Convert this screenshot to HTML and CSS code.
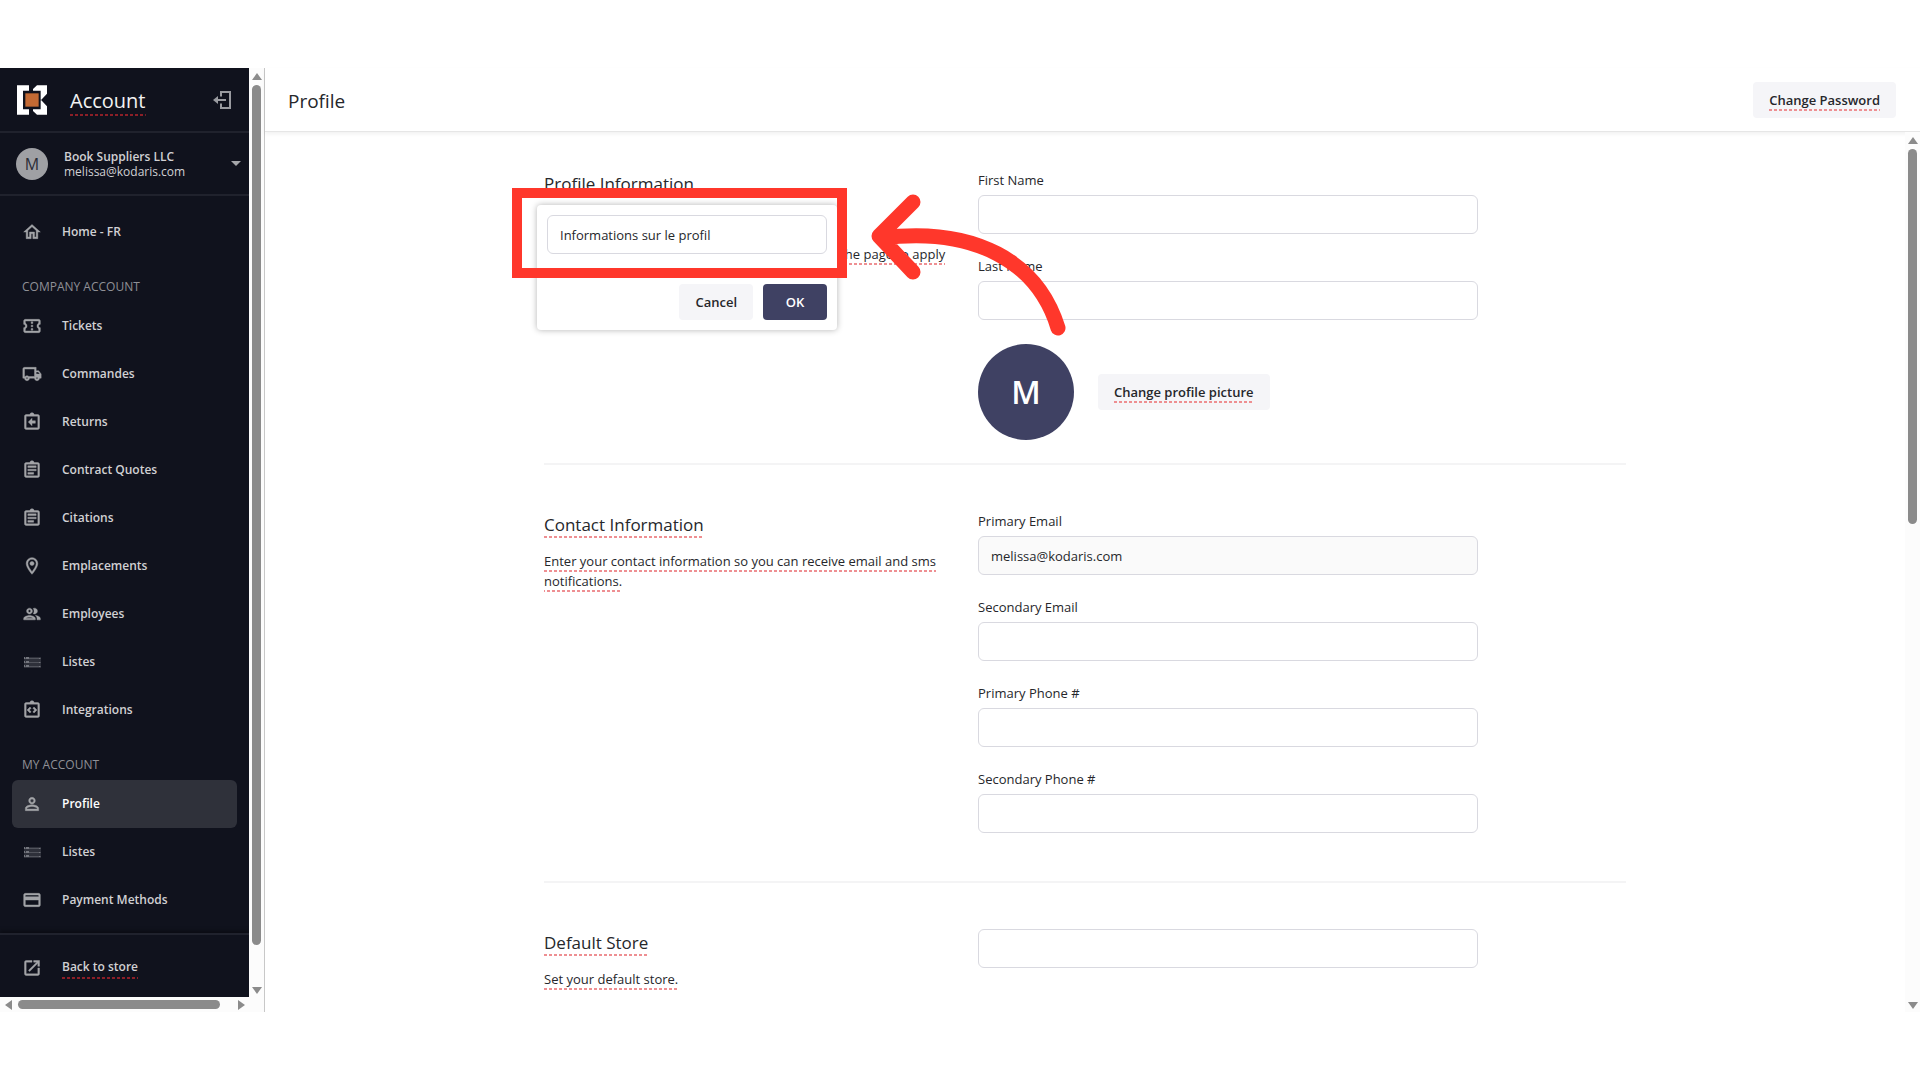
FILE: index.html
```html
<!DOCTYPE html>
<html lang="en">
<head>
    <meta charset="UTF-8">
    <meta name="viewport" content="width=device-width, initial-scale=1.0">
    <title>Profile</title>
    <link rel="stylesheet" href="styles.css">
</head>
<body>

<div class="app">
    <div class="side">
        <div class="side-row">
            <aside class="sidebar">
                <div class="brand">
                    <svg class="logo" viewBox="52 75 90 88" aria-hidden="true">
                        <path fill="#fff" d="M52 75h36v16H70v56h18v16H52zM112 75h30v25l-17 18h-2V91h-23v-5zM112 163h30v-25l-17-18h-2v27h-23v5z"/>
                        <path fill="#c46a34" d="M77 99h40v40H77z"/>
                    </svg>
                    <span class="brand-name"><span class="tr">Account</span></span>
                    <button class="icon-btn" aria-label="Log out">
                        <svg viewBox="0 0 18 18"><path fill="none" stroke="currentColor" stroke-width="2" d="M8 5.500V1h9v16H8v-4.500M13 9H4"/><path fill="currentColor" d="M0 9l5-4v8z"/></svg>
                    </button>
                </div>
                <button class="account">
                    <span class="account-avatar">M</span>
                    <span class="account-text"><b>Book Suppliers LLC</b><br>melissa@kodaris.com</span>
                    <svg class="caret" viewBox="0 0 10 5" fill="currentColor"><path d="M0 0h10L5 5z"/></svg>
                </button>
                <nav class="nav">
                    <a class="nav-link" href="#"><svg viewBox="0 0 24 24"><path d="M12 5.690l5 4.500V18h-2v-6H9v6H7v-7.810l5-4.500M12 3L2 12h3v8h6v-6h2v6h6v-8h3L12 3z"/></svg>Home - FR</a>
                    <h2 class="nav-title">COMPANY ACCOUNT</h2>
                    <a class="nav-link" href="#"><svg viewBox="0 0 24 24"><path d="M22 10V6c0-1.110-.9-2-2-2H4c-1.100 0-1.990.89-1.990 2v4c1.100 0 1.990.9 1.990 2s-.89 2-2 2v4c0 1.100.9 2 2 2h16c1.100 0 2-.9 2-2v-4c-1.100 0-2-.9-2-2s.9-2 2-2zm-2-1.460c-1.190.69-2 1.990-2 3.460s.81 2.770 2 3.460V18H4v-2.540c1.190-.69 2-1.990 2-3.460 0-1.480-.8-2.770-1.990-3.460L4 6h16v2.540zM11 15h2v2h-2zm0-4h2v2h-2zm0-4h2v2h-2z"/></svg>Tickets</a>
                    <a class="nav-link" href="#"><svg viewBox="0 0 24 24"><path d="M20 8h-3V4H3c-1.100 0-2 .9-2 2v11h2c0 1.660 1.340 3 3 3s3-1.340 3-3h6c0 1.660 1.340 3 3 3s3-1.340 3-3h2v-5l-3-4zm-.5 1.500l1.960 2.500H17V9.500h2.500zM6 18c-.55 0-1-.45-1-1s.45-1 1-1 1 .45 1 1-.45 1-1 1zm2.220-3c-.55-.61-1.330-1-2.220-1s-1.670.39-2.220 1H3V6h12v9H8.220zM18 18c-.55 0-1-.45-1-1s.45-1 1-1 1 .45 1 1-.45 1-1 1z"/></svg>Commandes</a>
                    <a class="nav-link" href="#"><svg viewBox="0 0 24 24"><path d="M19 3h-4.180C14.400 1.840 13.300 1 12 1s-2.400.84-2.820 2H5c-1.100 0-2 .9-2 2v14c0 1.100.9 2 2 2h14c1.100 0 2-.9 2-2V5c0-1.100-.9-2-2-2zm0 16H5V5h14v14zM16 10.500h-4V7.500L7.500 12l4.500 4.500v-3h4z"/></svg>Returns</a>
                    <a class="nav-link" href="#"><svg viewBox="0 0 24 24"><path d="M7 15h7v2H7zm0-4h10v2H7zm0-4h10v2H7zm12-4h-4.180C14.400 1.840 13.300 1 12 1s-2.400.84-2.820 2H5c-1.100 0-2 .9-2 2v14c0 1.100.9 2 2 2h14c1.100 0 2-.9 2-2V5c0-1.100-.9-2-2-2zm0 16H5V5h14v14z"/></svg>Contract Quotes</a>
                    <a class="nav-link" href="#"><svg viewBox="0 0 24 24"><path d="M7 15h7v2H7zm0-4h10v2H7zm0-4h10v2H7zm12-4h-4.180C14.400 1.840 13.300 1 12 1s-2.400.84-2.820 2H5c-1.100 0-2 .9-2 2v14c0 1.100.9 2 2 2h14c1.100 0 2-.9 2-2V5c0-1.100-.9-2-2-2zm0 16H5V5h14v14z"/></svg>Citations</a>
                    <a class="nav-link" href="#"><svg viewBox="0 0 24 24"><path d="M12 2C8.130 2 5 5.130 5 9c0 5.250 7 13 7 13s7-7.750 7-13c0-3.870-3.130-7-7-7zM7 9c0-2.760 2.240-5 5-5s5 2.240 5 5c0 2.880-2.880 7.190-5 9.880C9.920 16.210 7 11.850 7 9z"/><circle cx="12" cy="9" r="2.500"/></svg>Emplacements</a>
                    <a class="nav-link" href="#"><svg viewBox="0 0 24 24"><path d="M9 13.750c-2.340 0-7 1.170-7 3.500V19h14v-1.750c0-2.330-4.660-3.500-7-3.500zM4.340 17c.84-.58 2.870-1.250 4.660-1.250s3.820.67 4.660 1.250H4.340zM9 12c1.930 0 3.500-1.570 3.500-3.500S10.930 5 9 5 5.500 6.570 5.500 8.500 7.070 12 9 12zm0-5c.83 0 1.500.67 1.500 1.500S9.830 10 9 10s-1.500-.67-1.500-1.500S8.170 7 9 7zm7.040 6.810c1.160.84 1.960 1.960 1.960 3.440V19h4v-1.750c0-2.020-3.500-3.170-5.960-3.440zM15 12c1.930 0 3.500-1.570 3.500-3.500S16.930 5 15 5c-.54 0-1.040.13-1.500.35.63.89 1 1.980 1 3.150s-.37 2.260-1 3.150c.46.22.96.35 1.500.35z"/></svg>Employees</a>
                    <a class="nav-link dim" href="#"><svg viewBox="0 0 20 20"><path fill-opacity=".3" d="M2 5h17v11H2z"/><path fill-opacity=".5" d="M2 6h17v1H2zM2 10h17v1H2zM2 14h17v1H2z"/><path d="M2 5h1v2H2zm2 0h3v2H4zM2 9h1v2H2zm2 0h3v2H4zM2 13h1v2H2zm2 0h3v2H4zM17 6h1v1h-1zm0 4h1v1h-1zm0 4h1v1h-1z"/></svg>Listes</a>
                    <a class="nav-link" href="#"><svg viewBox="0 0 24 24"><path d="M19 3h-4.180C14.400 1.840 13.300 1 12 1s-2.400.84-2.820 2H5c-1.100 0-2 .9-2 2v14c0 1.100.9 2 2 2h14c1.100 0 2-.9 2-2V5c0-1.100-.9-2-2-2zm0 16H5V5h14v14zM11 14.170L8.830 12 11 9.830 9.590 8.410 6 12l3.590 3.590zM14.410 15.590L18 12l-3.590-3.590L13 9.830 15.170 12 13 14.170z"/></svg>Integrations</a>
                    <h2 class="nav-title">MY ACCOUNT</h2>
                    <a class="nav-link active" href="#"><svg viewBox="0 0 24 24"><path d="M12 5.900a2.100 2.100 0 110 4.200 2.100 2.100 0 010-4.200m0 9c2.970 0 6.100 1.460 6.100 2.100v1.100H5.900V17c0-.64 3.130-2.100 6.100-2.100M12 4C9.790 4 8 5.790 8 8s1.790 4 4 4 4-1.790 4-4-1.790-4-4-4zm0 9c-2.670 0-8 1.340-8 4v3h16v-3c0-2.660-5.330-4-8-4z"/></svg>Profile</a>
                    <a class="nav-link dim" href="#"><svg viewBox="0 0 20 20"><path fill-opacity=".3" d="M2 5h17v11H2z"/><path fill-opacity=".5" d="M2 6h17v1H2zM2 10h17v1H2zM2 14h17v1H2z"/><path d="M2 5h1v2H2zm2 0h3v2H4zM2 9h1v2H2zm2 0h3v2H4zM2 13h1v2H2zm2 0h3v2H4zM17 6h1v1h-1zm0 4h1v1h-1zm0 4h1v1h-1z"/></svg>Listes</a>
                    <a class="nav-link" href="#"><svg viewBox="0 0 24 24"><path d="M20 4H4c-1.110 0-1.990.89-1.990 2L2 18c0 1.110.89 2 2 2h16c1.110 0 2-.89 2-2V6c0-1.110-.89-2-2-2zm0 14H4v-6h16v6zm0-10H4V6h16v2z"/></svg>Payment Methods</a>
                </nav>
                <div class="side-foot">
                    <a class="nav-link" href="#"><svg viewBox="0 0 24 24"><path d="M19 19H5V5h7V3H5a2 2 0 00-2 2v14a2 2 0 002 2h14c1.100 0 2-.9 2-2v-7h-2v7zM14 3v2h3.590l-9.830 9.830 1.410 1.410L19 6.410V10h2V3h-7z"/></svg><span class="tr">Back to store</span></a>
                </div>
            </aside>
            <div class="vscroll side-scroll" aria-hidden="true"><i class="up"></i><i class="thumb"></i><i class="down"></i></div>
        </div>
        <div class="hscroll" aria-hidden="true"><i class="left"></i><i class="thumb"></i><i class="right"></i></div>
    </div>

    <main class="main">
        <header class="topbar">
            <h1>Profile</h1>
            <button class="btn"><span class="tr">Change Password</span></button>
        </header>
        <div class="body-row">
            <div class="content">
                <section class="section first">
                    <div class="info">
                        <h2><span class="tr">Profile Information</span></h2>
                        <p><span class="tr">Edit your profile.</span></p>
                        <p><span class="tr">Whenever you edit these options, please refresh the page to apply changes.</span></p>
                        <form class="popup">
                            <input type="text" aria-label="Translation" value="Informations sur le profil">
                            <div class="popup-actions">
                                <button type="button" class="btn">Cancel</button>
                                <button type="button" class="btn primary">OK</button>
                            </div>
                        </form>
                        <div class="marker"></div>
                        <svg class="arrow" viewBox="870 190 200 150" aria-hidden="true"><path d="M913 202L879 236L913 272M881 238C975 226 1038 262 1058 328"/></svg>
                    </div>
                    <div class="fields">
                        <div class="field"><label for="first">First Name</label><input type="text" id="first"></div>
                        <div class="field"><label for="last">Last Name</label><input type="text" id="last"></div>
                        <div class="picture">
                            <span class="avatar">M</span>
                            <button class="btn"><span class="tr">Change profile picture</span></button>
                        </div>
                    </div>
                </section>
                <section class="section">
                    <div class="info">
                        <h2><span class="tr">Contact Information</span></h2>
                        <p><span class="tr">Enter your contact information so you can receive email and sms notifications.</span></p>
                    </div>
                    <div class="fields">
                        <div class="field"><label for="email1">Primary Email</label><input type="email" id="email1" value="melissa@kodaris.com" readonly></div>
                        <div class="field"><label for="email2">Secondary Email</label><input type="email" id="email2"></div>
                        <div class="field"><label for="phone1">Primary Phone #</label><input type="tel" id="phone1"></div>
                        <div class="field"><label for="phone2">Secondary Phone #</label><input type="tel" id="phone2"></div>
                    </div>
                </section>
                <section class="section">
                    <div class="info">
                        <h2><span class="tr">Default Store</span></h2>
                        <p><span class="tr">Set your default store.</span></p>
                    </div>
                    <div class="fields">
                        <div class="field"><input type="text" aria-label="Default Store"></div>
                    </div>
                </section>
            </div>
            <div class="vscroll main-scroll" aria-hidden="true"><i class="up"></i><i class="thumb"></i><i class="down"></i></div>
        </div>
    </main>
</div>

</body>
</html>
```

FILE: styles.css
```css
* {
    box-sizing: border-box;
}
body {
    margin: 0;
    padding: 68px 0;
    height: 100vh;
    font-family: "Open Sans", "Noto Sans", sans-serif;
    font-size: 13px;
    line-height: 20px;
    color: #26272b;
    background: #fff;
}
h1, h2, p {
    margin: 0;
    font-weight: 400;
}
button, input {
    font: inherit;
    color: inherit;
}
button {
    border: none;
    cursor: pointer;
}
/* dashed underline = translatable text */
.tr {
    padding-bottom: 2px;
    background: repeating-linear-gradient(90deg, #ee8f92 0 3px, transparent 3px 5px) bottom / 100% 2px no-repeat;
}
.app {
    display: flex;
    height: 100%;
}

/* sidebar */
.side {
    display: flex;
    flex-direction: column;
    flex: none;
    width: 265px;
    background: #fcfcfc;
    border-right: 1px solid #c8c8c8;
}
.side-row {
    display: flex;
    flex: 1;
    min-height: 0;
}
.sidebar {
    display: flex;
    flex-direction: column;
    flex: 1;
    background: #10121d;
    color: #d0d0d3;
}
.sidebar .tr {
    background-image: repeating-linear-gradient(90deg, #8c1f28 0 3px, transparent 3px 5px);
}
.brand {
    display: flex;
    align-items: center;
    height: 65px;
    padding: 1px 18px 0 17px;
    border-bottom: 2px solid #20222d;
}
.logo {
    width: 30px;
    height: 30px;
}
.brand-name {
    flex: 1;
    margin-left: 23px;
    padding-top: 1px;
    font-size: 20px;
    color: #f2f2f3;
}
.icon-btn {
    padding: 0;
    background: none;
    color: #9a9ba0;
}
.icon-btn svg {
    display: block;
    width: 18px;
    height: 18px;
}
.account {
    display: flex;
    align-items: center;
    height: 63px;
    padding: 0 8px 0 16px;
    border-bottom: 2px solid #20222d;
    background: none;
    font-size: 12px;
    line-height: 15px;
    text-align: left;
}
.account b {
    font-weight: 600;
}
.account-avatar {
    width: 32px;
    margin-right: 16px;
    border-radius: 50%;
    background: #9fa0a4;
    color: #2b2d37;
    font-size: 16px;
    line-height: 32px;
    text-align: center;
}
.account-text {
    flex: 1;
}
.caret {
    width: 10px;
    height: 5px;
    color: #a5a6aa;
}
.nav {
    flex: 1;
    padding: 12px 12px 0;
}
.nav-link {
    display: flex;
    align-items: center;
    gap: 20px;
    height: 48px;
    padding-left: 10px;
    border-radius: 6px;
    color: #d0d0d3;
    font-size: 12px;
    font-weight: 600;
    text-decoration: none;
}
.nav-link svg {
    width: 20px;
    height: 20px;
    fill: #a3a4a8;
    stroke: #a3a4a8;
    stroke-width: 0.5;
}
.nav-link.dim svg {
    fill: #74767e;
    stroke: none;
}
.nav-link.active {
    background: #2f313a;
    color: #fff;
}
.nav-title {
    padding: 21px 10px 5px;
    font-size: 12px;
    color: #8f9096;
}
.side-foot {
    padding: 9px 12px 5px;
    border-top: 2px solid #20222d;
    box-shadow: 0 -2px 4px rgba(0, 0, 0, 0.4);
}

/* scrollbars */
.vscroll, .hscroll {
    display: flex;
    align-items: center;
    background: #fcfcfc;
}
.vscroll {
    flex-direction: column;
    width: 15px;
    padding: 5px 0 3px;
}
.hscroll {
    height: 15px;
    padding: 0 19px 0 5px;
}
.thumb {
    border-radius: 5px;
    background: #8b8b8b;
}
.vscroll .thumb {
    width: 9px;
    margin: 5px 0 auto;
}
.side-scroll .thumb {
    flex: 1;
    margin-bottom: 42px;
}
.main-scroll .thumb {
    height: 43%;
}
.hscroll .thumb {
    flex: 1;
    height: 9px;
    margin: 0 18px 0 6px;
}
.up, .down {
    border: 5px solid transparent;
    border-top-width: 0;
    border-bottom: 7px solid #8b8b8b;
}
.down {
    border-top: 7px solid #8b8b8b;
    border-bottom-width: 0;
}
.left, .right {
    border: 5px solid transparent;
    border-left-width: 0;
    border-right: 7px solid #8b8b8b;
}
.right {
    border-left: 7px solid #8b8b8b;
    border-right-width: 0;
}

/* main */
.main {
    display: flex;
    flex-direction: column;
    flex: 1;
    min-width: 0;
}
.topbar {
    display: flex;
    align-items: center;
    justify-content: space-between;
    height: 64px;
    padding: 0 24px 0 23px;
    border-bottom: 1px solid #e6e6e6;
    box-shadow: 0 2px 4px rgba(0, 0, 0, 0.06);
}
.topbar h1 {
    padding-top: 2px;
    font-size: 19px;
}
.body-row {
    display: flex;
    flex: 1;
    min-height: 0;
}
.content {
    flex: 1;
    overflow: hidden;
}
.section {
    display: grid;
    grid-template-columns: 402px 500px;
    gap: 32px;
    max-width: 1082px;
    margin: 0 auto;
    padding: 46px 0 48px;
    border-bottom: 2px solid #f4f4f5;
}
.section.first {
    padding: 38px 0 23px;
}
.section:last-child {
    border-bottom: none;
}
.info {
    position: relative;
    padding-top: 1px;
}
.info h2 {
    margin-bottom: 13px;
    font-size: 17px;
    line-height: 26px;
}
.info p {
    margin-bottom: 14px;
}
.fields {
    display: flex;
    flex-direction: column;
    gap: 22px;
}
.field label {
    display: block;
    margin-bottom: 5px;
}
.field input, .popup input {
    display: block;
    width: 100%;
    height: 39px;
    padding: 0 12px;
    border: 1px solid #d9d9e0;
    border-radius: 6px;
    background: #fff;
}
.field input[readonly] {
    background: #fafafa;
}
.picture {
    display: flex;
    align-items: center;
    gap: 24px;
    padding-top: 2px;
}
.avatar {
    width: 96px;
    border-radius: 50%;
    background: #3f4163;
    color: #fff;
    font-size: 32px;
    font-weight: 600;
    line-height: 96px;
    text-align: center;
}
.btn {
    height: 36px;
    padding: 0 16px;
    border-radius: 4px;
    background: #f5f5f8;
    font-weight: 600;
}
.btn.primary {
    min-width: 64px;
    background: #3f4163;
    color: #fff;
}

/* translation popup */
.popup {
    position: absolute;
    top: 35px;
    left: -7px;
    width: 300px;
    padding: 10px;
    border-radius: 4px;
    background: #fff;
    box-shadow: 0 0 6px rgba(0, 0, 0, 0.3);
}
.popup-actions {
    display: flex;
    justify-content: flex-end;
    gap: 10px;
    margin-top: 30px;
}
.marker {
    position: absolute;
    top: 18px;
    left: -32px;
    width: 335px;
    height: 90px;
    border: 10px solid #ff372b;
}
.arrow {
    position: absolute;
    top: 20px;
    left: 326px;
    width: 200px;
    height: 150px;
    fill: none;
    stroke: #ff372b;
    stroke-width: 15;
    stroke-linecap: round;
    stroke-linejoin: round;
}
```
